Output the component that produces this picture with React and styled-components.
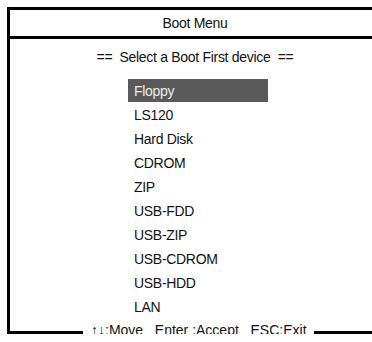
import React from "react"
import styled, { createGlobalStyle } from "styled-components"

const GlobalStyle = createGlobalStyle`
	html {
		overflow: hidden;
	}
	body {
		margin: 0;
		background: #fff;
		font-family: "Liberation Sans", Arial, sans-serif;
		color: #111;
		letter-spacing: -0.3px;
	}
`
const Frame = styled.div`
	margin: 7px 0 0 7px;
	width: 370px;
	border-left: 3px solid #000;
	border-top: 3px solid #000;
	display: flex;
	flex-direction: column;
`
const Title = styled.div`
	height: 26px;
	border-bottom: 3px solid #000;
	display: flex;
	align-items: center;
	justify-content: center;
	font-size: 14px;
`
const Body = styled.div`
	display: flex;
	flex-direction: column;
	align-items: center;
	padding-top: 10px;
`
const Subtitle = styled.div`
	font-size: 14px;
	line-height: 16px;
	white-space: pre;
`
const List = styled.ul`
	list-style: none;
	margin: 14px 0 0;
	padding: 0;
	align-self: flex-start;
	margin-left: 118px;
`
const Item = styled.li`
	height: 24px;
	font-size: 14px;
	span {
		display: flex;
		align-items: center;
		width: 140px;
		height: 23px;
		padding-left: 6px;
		box-sizing: border-box;
		background: ${p => (p.$active ? "#5a5a5a" : "transparent")};
		color: ${p => (p.$active ? "#ececec" : "#111")};
	}
`
const Footer = styled.div`
	display: flex;
	align-items: flex-end;
	height: 15px;
`
const Line = styled.div`
	height: 3px;
	background: #000;
	width: ${p => p.$w}px;
	flex: ${p => (p.$grow ? 1 : "none")};
`
const Keys = styled.div`
	font-size: 14px;
	letter-spacing: 0;
	white-space: pre;
	padding: 0 7px 0 8px;
	line-height: 16px;
	margin-bottom: -4px;
`

const devices = [
	"Floppy",
	"LS120",
	"Hard Disk",
	"CDROM",
	"ZIP",
	"USB-FDD",
	"USB-ZIP",
	"USB-CDROM",
	"USB-HDD",
	"LAN"
]

export default function App() {
	return (
		<>
			<GlobalStyle />
			<Frame>
				<Title>Boot Menu</Title>
				<Body>
					<Subtitle>{"==  Select a Boot First device  =="}</Subtitle>
					<List>
						{devices.map((d, i) => (
							<Item key={d} $active={i === 0}>
								<span>{d}</span>
							</Item>
						))}
					</List>
				</Body>
				<Footer>
					<Line $w={73} />
					<Keys>{"↑↓:Move   Enter :Accept   ESC:Exit"}</Keys>
					<Line $grow />
				</Footer>
			</Frame>
		</>
	)
}
